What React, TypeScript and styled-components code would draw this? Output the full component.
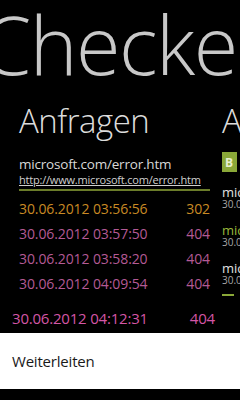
import React from "react"
import styled, { createGlobalStyle } from "styled-components"

const GlobalStyle = createGlobalStyle`
  html, body {
    margin: 0;
    padding: 0;
    background: #000;
  }
  body {
    font-family: "Open Sans", "Noto Sans", sans-serif;
  }
`

type Request = {
  time: string
  status: number
}

const requests: Request[] = [
  { time: "30.06.2012 03:56:56", status: 302 },
  { time: "30.06.2012 03:57:50", status: 404 },
  { time: "30.06.2012 03:58:20", status: 404 },
  { time: "30.06.2012 04:09:54", status: 404 },
]

const selected: Request = { time: "30.06.2012 04:12:31", status: 404 }

const Screen = styled.div`
  width: 240px;
  height: 400px;
  background: #000;
  overflow: hidden;
  display: flex;
  flex-direction: column;
`

const AppTitle = styled.div`
  font-size: 81px;
  font-weight: 300;
  color: #c8c8c8;
  line-height: 84px;
  letter-spacing: -1.5px;
  white-space: nowrap;
  margin: 2px 0 0 -19px;
  height: 97px;
`

const Panorama = styled.div`
  display: flex;
  gap: 12px;
  padding-left: 19px;
`

const Column = styled.div<{ $width: number }>`
  flex: 0 0 ${(p) => p.$width}px;
  display: flex;
  flex-direction: column;
`

const Header = styled.div`
  font-size: 33px;
  font-weight: 300;
  color: #dcdcdc;
  line-height: 44px;
  height: 46px;
  letter-spacing: -0.5px;
  white-space: nowrap;
`

const Domain = styled.div`
  margin-top: 10px;
  font-size: 13.5px;
  color: #d8d8d8;
  line-height: 18px;
  letter-spacing: -0.2px;
`

const Link = styled.div`
  font-size: 11px;
  color: #cfcfcf;
  text-decoration: underline;
  line-height: 14px;
  letter-spacing: -0.2px;
`

const Rule = styled.div<{ $width: number }>`
  width: ${(p) => p.$width}px;
  height: 2px;
  background: #6b7d2a;
  margin-top: 2px;
`

const Rows = styled.div`
  display: flex;
  flex-direction: column;
  margin-top: 8px;
`

const Row = styled.div<{ $color: string }>`
  display: flex;
  justify-content: space-between;
  width: 191px;
  height: 25px;
  font-size: 14px;
  line-height: 20px;
  color: ${(p) => p.$color};
  letter-spacing: -0.1px;
`

const SelectedRow = styled.div`
  display: flex;
  justify-content: space-between;
  width: 203px;
  padding: 9px 0 0 12px;
  height: 25px;
  font-size: 15px;
  line-height: 20px;
  color: #d456a6;
  letter-spacing: -0.2px;
`

const Menu = styled.div`
  background: #fff;
  height: 56px;
  display: flex;
  align-items: center;
  padding: 0 12px;
  flex-shrink: 0;
`

const MenuItem = styled.div`
  font-size: 15px;
  color: #1a1a1a;
  letter-spacing: -0.2px;
`

const Tile = styled.div`
  margin-top: 7px;
  width: 12px;
  height: 20px;
  background: #8aa838;
  color: #e8f0d0;
  font-size: 12px;
  font-weight: 700;
  display: flex;
  align-items: center;
  padding-left: 3px;
`

const ItemName = styled.div<{ $color: string }>`
  font-size: 13px;
  line-height: 14px;
  color: ${(p) => p.$color};
  margin-top: 13px;
  white-space: nowrap;
`

const ItemDate = styled.div`
  font-size: 10px;
  line-height: 11px;
  color: #a8a8a8;
  white-space: nowrap;
`

const Dash = styled.div`
  margin-top: 8px;
  width: 12px;
  height: 2px;
  background: #8aa838;
`

const statusColor = (s: number) => (s === 302 ? "#c98a24" : "#b45a95")

export default function App() {
  return (
    <>
      <GlobalStyle />
      <Screen>
        <AppTitle>Checker</AppTitle>
        <Panorama>
          <Column $width={191}>
            <Header>Anfragen</Header>
            <Domain>microsoft.com/error.htm</Domain>
            <Link>http://www.microsoft.com/error.htm</Link>
            <Rule $width={191} />
            <Rows>
              {requests.map((r, i) => (
                <Row key={i} $color={statusColor(r.status)}>
                  <span>{r.time}</span>
                  <span>{r.status}</span>
                </Row>
              ))}
            </Rows>
          </Column>
          <Column $width={120}>
            <Header>Antworten</Header>
            <Tile>B</Tile>
            <ItemName $color="#e0e0e0">microsoft.com</ItemName>
            <ItemDate>30.06.2012</ItemDate>
            <ItemName $color="#9ab83a">microsoft.com</ItemName>
            <ItemDate>30.06.2012</ItemDate>
            <ItemName $color="#e0e0e0">microsoft.com</ItemName>
            <ItemDate>30.06.2012</ItemDate>
            <Dash />
          </Column>
        </Panorama>
        <SelectedRow>
          <span>{selected.time}</span>
          <span>{selected.status}</span>
        </SelectedRow>
        <Menu>
          <MenuItem>Weiterleiten</MenuItem>
        </Menu>
      </Screen>
    </>
  )
}
